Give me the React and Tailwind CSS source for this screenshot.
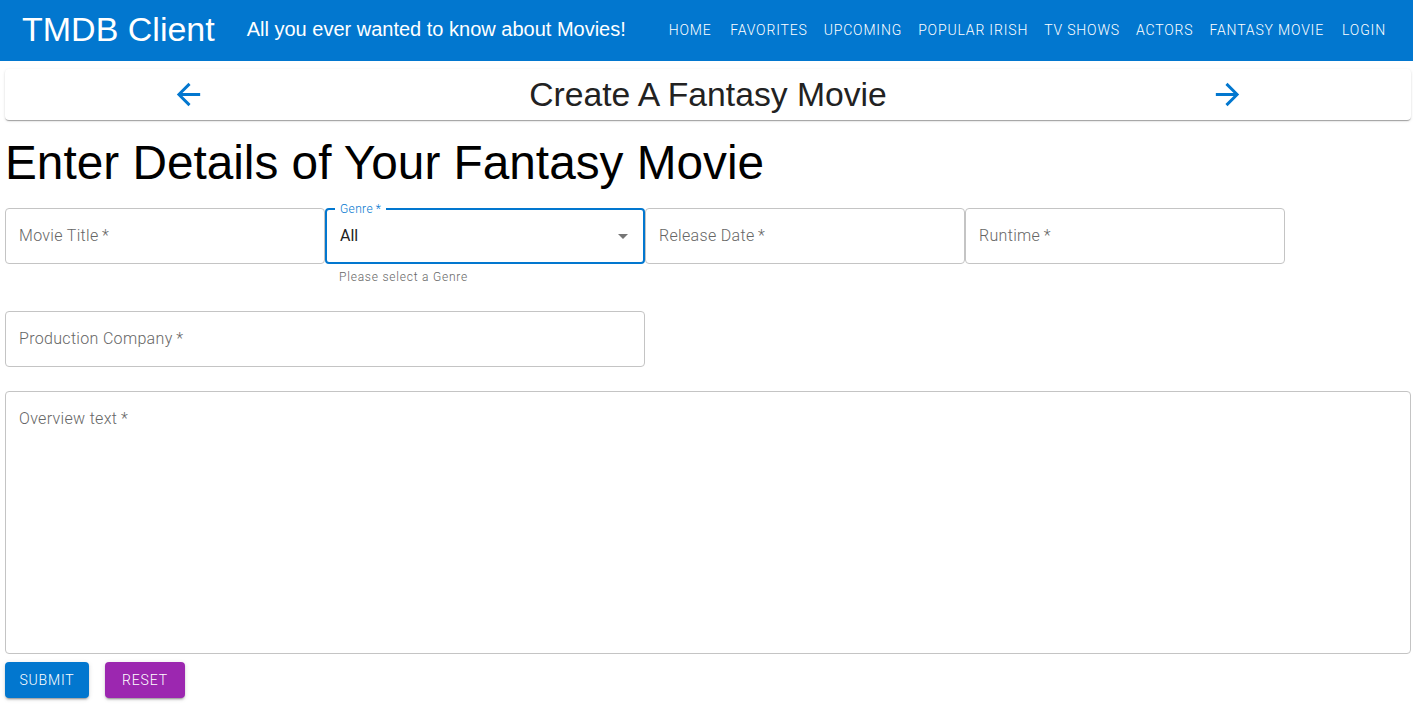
import { useState } from 'react';

const navItems = ['Home', 'Favorites', 'Upcoming', 'Popular Irish', 'TV Shows', 'Actors', 'Fantasy Movie', 'Login'];

const arial = { fontFamily: '"Liberation Sans", Arial, sans-serif' };

function ArrowBack() {
  return (
    <svg viewBox="0 0 24 24" className="w-[35px] h-[35px] fill-[#0277cf]">
      <path d="M20 11H7.83l5.59-5.59L12 4l-8 8 8 8 1.41-1.41L7.83 13H20v-2z" />
    </svg>
  );
}

function ArrowForward() {
  return (
    <svg viewBox="0 0 24 24" className="w-[35px] h-[35px] fill-[#0277cf]">
      <path d="M12 4l-1.41 1.41L16.17 11H4v2h12.17l-5.58 5.59L12 20l8-8z" />
    </svg>
  );
}

// plain outlined field, label sits inside as placeholder
function Field({ label, className = '' }) {
  return (
    <div className={`h-[56px] border border-[#c4c4c4] rounded-[4px] flex items-center px-[13px] text-[16px] font-light text-[#666] tracking-[0.02em] ${className}`}>
      {label}{'\u2009*'}
    </div>
  );
}

export default function App() {
  const [genre] = useState('All');

  return (
    <div className="min-h-screen bg-white font-['Roboto',sans-serif]">
      {/* APP BAR */}
      <header className="h-[61px] bg-[#0277cf] text-white flex items-center pl-[22px] pr-[17px]">
        <h4 className="text-[34px] leading-none -mt-[3px]" style={arial}>TMDB Client</h4>
        <h6 className="ml-[32px] text-[20px] font-medium leading-none -mt-[3px]" style={arial}>All you ever wanted to know about Movies!</h6>
        <div className="flex-1" />
        <nav className="flex items-center -mt-[1px]">
          {navItems.map((item) => (
            <button key={item} className="min-w-[64px] px-[8px] py-[6px] text-[14px] font-light uppercase tracking-[0.06em] leading-[1.75] text-white">
              {item}
            </button>
          ))}
        </nav>
      </header>

      <main className="pl-[5px] pr-[2px]">
        {/* PAGE HEADER CARD */}
        <div className="mt-[8px] h-[51px] bg-white rounded-[4px] shadow-[0_2px_1px_-1px_rgba(0,0,0,0.2),0_1px_1px_0_rgba(0,0,0,0.14),0_1px_3px_0_rgba(0,0,0,0.12)] flex items-center justify-between px-[154px]">
          <button className="p-[12px]"><ArrowBack /></button>
          <h4 className="text-[33.7px] text-[#222] leading-none" style={arial}>Create A Fantasy Movie</h4>
          <button className="p-[12px]"><ArrowForward /></button>
        </div>

        <h3 className="mt-[15px] text-[47.75px] leading-[56px] text-black" style={arial}>
          Enter Details of Your Fantasy Movie
        </h3>

        {/* FORM */}
        <form className="mt-[17px]">
          <div className="flex items-start">
            <Field label="Movie Title" className="w-[320px]" />
            <div className="w-[320px]">
              <div className="relative h-[56px] border-2 border-[#0277cf] rounded-[4px] flex items-center pl-[13px] pr-[8px] text-[16px] text-[#222]">
                <span className="absolute -top-[9px] left-[8px] bg-white px-[5px] text-[12px] leading-[16px] font-light text-[#0277cf] tracking-[0.03em]">Genre{'\u2009*'}</span>
                <span className="flex-1">{genre}</span>
                <svg viewBox="0 0 24 24" className="w-[24px] h-[24px] fill-[#757575]"><path d="M7 10l5 5 5-5z" /></svg>
              </div>
              <p className="mt-[3px] ml-[14px] text-[12px] leading-[20px] font-light text-[#666] tracking-[0.065em]">Please select a Genre</p>
            </div>
            <Field label="Release Date" className="w-[320px]" />
            <Field label="Runtime" className="w-[320px]" />
          </div>

          <Field label="Production Company" className="mt-[24px] w-[640px]" />

          <div className="mt-[24px] h-[263px] border border-[#c4c4c4] rounded-[4px] px-[13px] pt-[15px] text-[16px] font-light text-[#666] leading-[23px] tracking-[0.02em]">
            Overview text{'\u2009*'}
          </div>

          <div className="mt-[8px] flex gap-[16px]">
            <button type="button" className="h-[36px] w-[84px] rounded-[4px] bg-[#0277cf] text-white text-[14px] font-light uppercase tracking-[0.06em] shadow-[0_3px_1px_-2px_rgba(0,0,0,0.2),0_2px_2px_0_rgba(0,0,0,0.14),0_1px_5px_0_rgba(0,0,0,0.12)]">
              Submit
            </button>
            <button type="button" className="h-[36px] w-[80px] rounded-[4px] bg-[#9c27b0] text-white text-[14px] font-light uppercase tracking-[0.06em] shadow-[0_3px_1px_-2px_rgba(0,0,0,0.2),0_2px_2px_0_rgba(0,0,0,0.14),0_1px_5px_0_rgba(0,0,0,0.12)]">
              Reset
            </button>
          </div>
        </form>
      </main>
    </div>
  );
}
